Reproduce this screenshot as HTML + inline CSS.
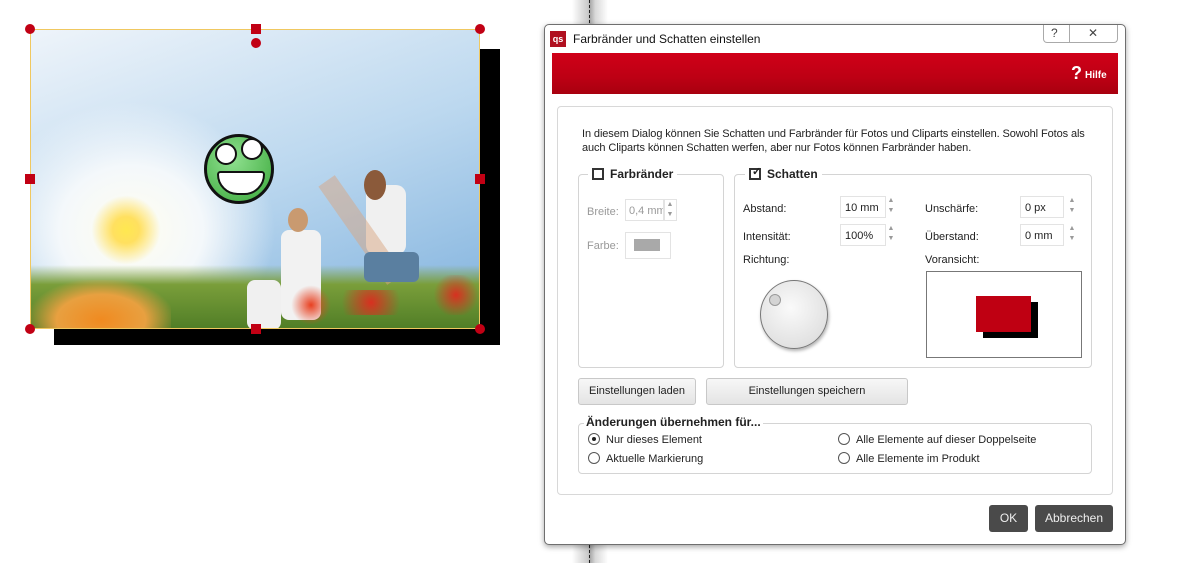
<!DOCTYPE html>
<html><head><meta charset="utf-8"><style>
*{margin:0;padding:0;box-sizing:border-box}
body{width:1181px;height:563px;background:#fff;position:relative;overflow:hidden;font-family:"Liberation Sans",sans-serif;font-size:11px;color:#222}
.a{position:absolute;white-space:nowrap}
.gb{position:absolute;border:1px solid #d4d4d4;border-radius:4px}
.lg{position:absolute;background:#fff;padding:0 4px;font-weight:bold;font-size:12px;color:#222}
.cb{display:inline-block;width:12px;height:12px;border:2px solid #333;vertical-align:-2px;margin-right:6px;position:relative}
.in{position:absolute;height:22px;border:1px solid #e3e3e3;background:#fff;padding:5px 4px;font-size:11px;white-space:nowrap;overflow:hidden}
.sp{position:absolute;width:14px;height:22px;color:#9a9a9a;font-size:7px;line-height:10px;text-align:center}
.btn{position:absolute;border:1px solid #c8c8c8;border-radius:3px;background:linear-gradient(#f7f7f7,#e4e4e4);text-align:center;line-height:25px;font-size:11px}
.rd{display:inline-block;width:12px;height:12px;border:1px solid #555;border-radius:50%;vertical-align:-2px;margin-right:6px;position:relative;background:#fff}
.dk{position:absolute;background:#4a4a4a;color:#eee;border-radius:3px;text-align:center;line-height:27px;font-size:12px}
.h{position:absolute;background:#c10014;width:10px;height:10px}
</style></head><body>
<div class="a" style="left:572px;top:0;width:36px;height:563px;background:linear-gradient(90deg,#fff,#c9c9c9 45%,#a8a8a8 50%,#d9d9d9 65%,#fff)"></div>
<div class="a" style="left:589px;top:0;height:563px;border-left:1px dashed #222"></div>
<div class="a" style="left:54px;top:49px;width:446px;height:296px;background:#000"></div>
<div class="a" style="left:30px;top:29px;width:450px;height:300px;overflow:hidden;border:1px solid #f0c860;background:radial-gradient(ellipse 180px 160px at 100px 200px,#fffef0 0%,#f4f8fb 40%,transparent 80%),linear-gradient(160deg,#eef4fa 0%,#bcd8ef 50%,#7fb1dd 100%)">
 <div class="a" style="left:0;top:235px;width:450px;height:65px;background:linear-gradient(rgba(143,176,74,0),#7a9e3a 30%,#4f7d26)"></div>
 <div class="a" style="left:0;top:250px;width:140px;height:50px;background:radial-gradient(ellipse at 50% 80%,#f08a20,#e8a040 45%,transparent 75%)"></div>
 <div class="a" style="left:60px;top:160px;width:70px;height:80px;background:radial-gradient(circle,#ffe850 0%,#ffe060 25%,transparent 65%)"></div>
 <div class="a" style="left:335px;top:155px;width:40px;height:70px;background:#f0f0f0;border-radius:10px"></div>
 <div class="a" style="left:320px;top:140px;width:20px;height:120px;background:linear-gradient(#d9a682,#d9a682);transform:rotate(-35deg);opacity:.5"></div>
 <div class="a" style="left:333px;top:140px;width:22px;height:30px;background:#8b5a3a;border-radius:50%"></div>
 <div class="a" style="left:333px;top:222px;width:55px;height:30px;background:#5a7fa0;border-radius:6px"></div>
 <div class="a" style="left:250px;top:200px;width:40px;height:90px;background:#f2f2f2;border-radius:8px"></div>
 <div class="a" style="left:257px;top:178px;width:20px;height:24px;background:#c99a70;border-radius:50%"></div>
 <div class="a" style="left:216px;top:250px;width:34px;height:50px;background:#f0f0f0;border-radius:8px"></div>
 <div class="a" style="left:260px;top:255px;width:40px;height:40px;background:radial-gradient(circle,#e84020,transparent 70%)"></div>
 <div class="a" style="left:400px;top:245px;width:50px;height:40px;background:radial-gradient(circle,#d83020,transparent 70%)"></div>
 <div class="a" style="left:300px;top:260px;width:80px;height:25px;background:radial-gradient(circle,#d83020,transparent 70%)"></div>
 <div class="a" style="left:173px;top:104px;width:70px;height:70px;border:3px solid #111;border-radius:50%;background:radial-gradient(circle at 40% 35%,#8fe08f,#3aa83a)"></div>
 <div class="a" style="left:184px;top:113px;width:22px;height:22px;border:2px solid #111;border-radius:50%;background:#fff"></div>
 <div class="a" style="left:210px;top:108px;width:22px;height:22px;border:2px solid #111;border-radius:50%;background:#fff"></div>
 <div class="a" style="left:186px;top:141px;width:48px;height:24px;border:2px solid #111;border-radius:4px 4px 24px 24px;background:#fff"></div>
</div>
<div class="h" style="left:25px;top:24px;border-radius:50%"></div>
<div class="h" style="left:251px;top:24px"></div>
<div class="h" style="left:251px;top:38px;border-radius:50%"></div>
<div class="h" style="left:475px;top:24px;border-radius:50%"></div>
<div class="h" style="left:25px;top:174px"></div>
<div class="h" style="left:475px;top:174px"></div>
<div class="h" style="left:25px;top:324px;border-radius:50%"></div>
<div class="h" style="left:251px;top:324px"></div>
<div class="h" style="left:475px;top:324px;border-radius:50%"></div>
<div class="a" style="left:544px;top:24px;width:582px;height:521px;border:1px solid #6f6f6f;border-radius:5px;background:#fff;box-shadow:0 2px 6px rgba(0,0,0,.35)"></div>
<div class="a" style="left:550px;top:31px;width:16px;height:16px;background:#b01020;color:#fff;font-size:9px;font-weight:bold;line-height:16px;text-align:center">qs</div>
<div class="a" style="left:573px;top:32px;font-size:12px;color:#111">Farbränder und Schatten einstellen</div>
<div class="a" style="left:1043px;top:25px;width:75px;height:18px;border:1px solid #aaa;border-top:none;border-radius:0 0 4px 4px"></div>
<div class="a" style="left:1069px;top:25px;height:18px;border-left:1px solid #aaa"></div>
<div class="a" style="left:1051px;top:26px;font-size:12px;color:#444">?</div>
<div class="a" style="left:1088px;top:26px;font-size:12px;color:#444">✕</div>
<div class="a" style="left:552px;top:53px;width:566px;height:41px;background:linear-gradient(#d00018,#bd0014 60%,#a8000f)"></div>
<div class="a" style="left:1071px;top:63px;color:#fff;font-weight:bold;font-size:18px">?</div>
<div class="a" style="left:1085px;top:70px;color:#fff;font-weight:bold;font-size:10px">Hilfe</div>
<div class="a" style="left:557px;top:106px;width:556px;height:389px;border:1px solid #d8d8d8;border-radius:4px"></div>
<div class="a" style="left:582px;top:127px;width:520px;line-height:14px;font-size:11px;white-space:normal;letter-spacing:-0.1px">In diesem Dialog können Sie Schatten und Farbränder für Fotos und Cliparts einstellen. Sowohl Fotos als auch Cliparts können Schatten werfen, aber nur Fotos können Farbränder haben.</div>
<div class="gb" style="left:578px;top:174px;width:146px;height:194px"></div>
<div class="lg" style="left:588px;top:167px"><span class="cb"></span>Farbränder</div>
<div class="a" style="left:587px;top:206px;color:#999">Breite:</div>
<div class="in" style="left:625px;top:199px;width:40px;color:#999;padding:5px 3px">0,4 mm</div>
<div class="sp" style="left:663px;top:199px;border:1px solid #e3e3e3">▲<br>▼</div>
<div class="a" style="left:587px;top:240px;color:#999">Farbe:</div>
<div class="in" style="left:625px;top:232px;width:46px;height:27px"><div style="width:26px;height:12px;background:#a9a9a9;margin:1px 4px"></div></div>
<div class="gb" style="left:734px;top:174px;width:358px;height:194px"></div>
<div class="lg" style="left:745px;top:167px"><span class="cb"><span style="position:absolute;left:1px;top:-5px;font-size:11px">✓</span></span>Schatten</div>
<div class="a" style="left:743px;top:203px">Abstand:</div>
<div class="in" style="left:840px;top:196px;width:46px">10 mm</div><div class="sp" style="left:884px;top:196px">▲<br>▼</div>
<div class="a" style="left:743px;top:231px">Intensität:</div>
<div class="in" style="left:840px;top:224px;width:46px">100%</div><div class="sp" style="left:884px;top:224px">▲<br>▼</div>
<div class="a" style="left:925px;top:203px">Unschärfe:</div>
<div class="in" style="left:1020px;top:196px;width:44px">0 px</div><div class="sp" style="left:1065px;top:196px">▲<br>▼</div>
<div class="a" style="left:925px;top:231px">Überstand:</div>
<div class="in" style="left:1020px;top:224px;width:44px">0 mm</div><div class="sp" style="left:1065px;top:224px">▲<br>▼</div>
<div class="a" style="left:743px;top:254px">Richtung:</div>
<div class="a" style="left:925px;top:254px">Voransicht:</div>
<div class="a" style="left:760px;top:280px;width:68px;height:69px;border:1px solid #777;border-radius:50%;background:radial-gradient(circle at 45% 40%,#fafafa,#e2e2e2 70%,#ccc);box-shadow:1px 2px 3px rgba(0,0,0,.3)"></div>
<div class="a" style="left:769px;top:294px;width:12px;height:12px;border:1px solid #999;border-radius:50%;background:#d4d4d4"></div>
<div class="a" style="left:926px;top:271px;width:156px;height:87px;border:1px solid #777;background:#fff"></div>
<div class="a" style="left:983px;top:302px;width:55px;height:36px;background:#000"></div>
<div class="a" style="left:976px;top:296px;width:55px;height:36px;background:#bf0012"></div>
<div class="btn" style="left:578px;top:378px;width:118px;height:27px">Einstellungen laden</div>
<div class="btn" style="left:706px;top:378px;width:202px;height:27px">Einstellungen speichern</div>
<div class="gb" style="left:578px;top:423px;width:514px;height:51px"></div>
<div class="lg" style="left:584px;top:415px;padding:0 2px">Änderungen übernehmen für...</div>
<div class="a" style="left:588px;top:433px"><span class="rd"><span style="position:absolute;left:3px;top:3px;width:4px;height:4px;border-radius:50%;background:#222"></span></span>Nur dieses Element</div>
<div class="a" style="left:588px;top:452px"><span class="rd"></span>Aktuelle Markierung</div>
<div class="a" style="left:838px;top:433px"><span class="rd"></span>Alle Elemente auf dieser Doppelseite</div>
<div class="a" style="left:838px;top:452px"><span class="rd"></span>Alle Elemente im Produkt</div>
<div class="dk" style="left:989px;top:505px;width:39px;height:27px">OK</div>
<div class="dk" style="left:1035px;top:505px;width:78px;height:27px">Abbrechen</div>
</body></html>
